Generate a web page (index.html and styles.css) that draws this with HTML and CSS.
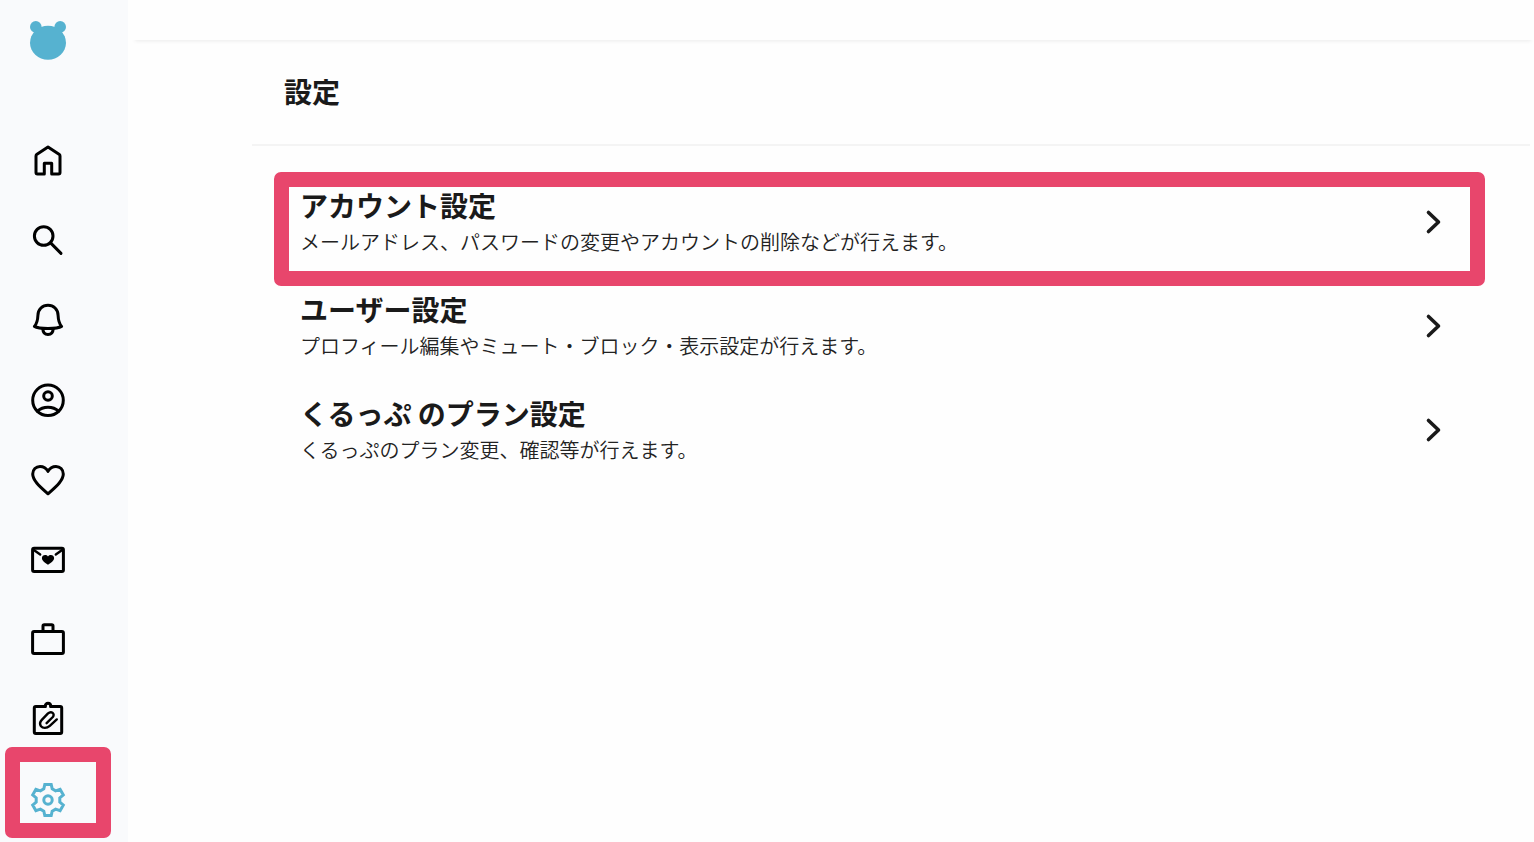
FILE: index.html
```
<!DOCTYPE html>
<html lang="ja">
  <head>
    <meta charset="UTF-8" />
    <meta name="viewport" content="width=device-width, initial-scale=1" />
    <title>設定</title>
    <link rel="stylesheet" href="styles.css">
  </head>
  <body>
    <div class="layout">
      <aside class="sidebar">
        <a class="logo" href="#" aria-label="くるっぷ">
          <svg viewBox="0 0 40 40">
            <circle cx="7.8" cy="6.9" r="5.8" />
            <circle cx="32.2" cy="6.9" r="5.8" />
            <ellipse cx="20" cy="22.7" rx="18" ry="17" />
          </svg>
        </a>
        <nav class="menu">
          <a class="menu-item" href="#" aria-label="ホーム">
            <svg viewBox="0 0 40 40">
              <path d="M20 7L31 14.2Q32 15 32 16V32.5Q32 34 30.5 34H23.7V23.2H16.3V34H9.5Q8 34 8 32.5V16Q8 15 9 14.2Z" />
            </svg>
          </a>
          <a class="menu-item" href="#" aria-label="検索">
            <svg viewBox="0 0 40 40">
              <circle cx="15.7" cy="16" r="9.3" />
              <path d="M22.6 22.9L33 33.4" />
            </svg>
          </a>
          <a class="menu-item" href="#" aria-label="通知">
            <svg viewBox="0 0 40 40">
              <path d="M6.4 26.4C9 23.5 9.7 20.5 9.9 15.5C10 9.3 14.5 5.2 20 5.2S30 9.3 30.1 15.5C30.3 20.5 31 23.5 33.6 26.4C29 29.2 11 29.2 6.4 26.4Z" />
              <path d="M14.8 28.8C15 32.4 17.2 34.4 20 34.4S25 32.4 25.2 28.8" />
            </svg>
          </a>
          <a class="menu-item" href="#" aria-label="プロフィール">
            <svg viewBox="0 0 40 40">
              <circle cx="20" cy="20.3" r="15.3" />
              <circle cx="20" cy="16" r="4.3" />
              <path d="M9.4 31.2C15 26 25 26 30.6 31.2" />
            </svg>
          </a>
          <a class="menu-item" href="#" aria-label="お気に入り">
            <svg viewBox="0 0 40 40">
              <path d="M20 33.8C13 27.5 4.7 20.8 4.7 14C4.7 9.5 8 6.4 12 6.4C15.8 6.4 18.3 8.2 20 11.4C21.7 8.2 24.2 6.4 28 6.4C32 6.4 35.3 9.5 35.3 14C35.3 20.8 27 27.5 20 33.8Z" />
            </svg>
          </a>
          <a class="menu-item" href="#" aria-label="レター">
            <svg viewBox="0 0 40 40">
              <rect x="4.6" y="8.2" width="30.8" height="23.4" rx="1.5" />
              <path d="M5.5 9.8L12.2 14.6M34.5 9.8L27.8 14.6" stroke-width="2.4" />
              <path class="solid" d="M20 24.8C17 23 13.9 20.6 13.9 18C13.9 14.8 18.2 14.2 20 16.4C21.8 14.2 26.1 14.8 26.1 18C26.1 20.6 23 23 20 24.8Z" />
            </svg>
          </a>
          <a class="menu-item" href="#" aria-label="ショップ">
            <svg viewBox="0 0 40 40">
              <rect x="4.6" y="11.4" width="30.8" height="22.2" rx="1.5" />
              <path d="M15 11V6Q15 4.7 16.3 4.7H23.7Q25 4.7 25 6V11" />
            </svg>
          </a>
          <a class="menu-item" href="#" aria-label="クリップ">
            <svg viewBox="0 0 40 40">
              <path d="M17.2 6.5H7.8Q6.3 6.5 6.3 8V32Q6.3 33.5 7.8 33.5H32.2Q33.7 33.5 33.7 32V8Q33.7 6.5 32.2 6.5H22.8" />
              <path d="M17.2 6.5C17.2 2.2 22.8 2.2 22.8 6.5" />
              <path d="M28.8 19.4L21.8 25.8C18.6 28.6 14.8 28.4 13 26.2C11.4 24 12 21.8 13.8 19.9L20 13.4C23.4 10.4 27.4 13.8 24.8 17L18.6 23.2" stroke-width="2.4" />
            </svg>
          </a>
          <a class="menu-item active marked" href="#" aria-label="設定" aria-current="page">
            <svg viewBox="0 0 40 40">
              <path d="M16.8 4.4L23.2 4.4L24.2 8.8L27.6 10.8L32.1 9.3L35.3 14.9L31.8 18L31.8 22L35.3 25.1L32.1 30.7L27.6 29.2L24.2 31.2L23.2 35.6L16.8 35.6L15.8 31.2L12.4 29.2L7.9 30.7L4.7 25.1L8.2 22L8.2 18L4.7 14.9L7.9 9.3L12.4 10.8L15.8 8.8Z" />
              <circle cx="20" cy="20" r="4.2" />
            </svg>
          </a>
        </nav>
      </aside>

      <div class="page">
        <header class="topbar"></header>
        <main class="content">
          <h1>設定</h1>
          <div class="list">
            <a class="item marked" href="#">
              <div class="item-text">
                <h2>アカウント設定</h2>
                <p>メールアドレス、パスワードの変更やアカウントの削除などが行えます。</p>
              </div>
              <svg class="arrow" viewBox="0 0 24 24"><path d="M6.5 2.5L16.5 12L6.5 21.5" /></svg>
            </a>
            <a class="item" href="#">
              <div class="item-text">
                <h2>ユーザー設定</h2>
                <p>プロフィール編集やミュート・ブロック・表示設定が行えます。</p>
              </div>
              <svg class="arrow" viewBox="0 0 24 24"><path d="M6.5 2.5L16.5 12L6.5 21.5" /></svg>
            </a>
            <a class="item" href="#">
              <div class="item-text">
                <h2>くるっぷ のプラン設定</h2>
                <p>くるっぷのプラン変更、確認等が行えます。</p>
              </div>
              <svg class="arrow" viewBox="0 0 24 24"><path d="M6.5 2.5L16.5 12L6.5 21.5" /></svg>
            </a>
          </div>
        </main>
      </div>
    </div>
  </body>
</html>
```
FILE: styles.css
```
* {
  box-sizing: border-box;
  margin: 0;
  padding: 0;
}

body {
  background-color: #fefefe;
  color: #1a1a1a;
  font-family: "Noto Sans CJK JP", sans-serif;
}

a {
  color: inherit;
  text-decoration: none;
}

.layout {
  display: flex;
  min-height: 100vh;
}

/* sidebar */
.sidebar {
  flex: none;
  width: 128px;
  background-color: #f9fafc;
}

.sidebar svg {
  display: block;
  width: 40px;
  height: 40px;
}

.logo {
  display: block;
  padding: 20px 28px;
  margin-bottom: 40px;
  fill: #56b2d0;
}

.menu {
  display: flex;
  flex-direction: column;
}

.menu-item {
  padding: 20px 28px;
  fill: none;
  stroke: #000;
  stroke-width: 3;
  stroke-linecap: round;
  stroke-linejoin: round;
}

.menu-item .solid {
  fill: #000;
  stroke: none;
}

.menu-item.active {
  stroke: #56b2d0;
  stroke-linejoin: miter;
}

/* pink frame drawn over the marked links */
.marked {
  position: relative;
}

.marked::after {
  content: "";
  position: absolute;
  border: 15px solid #e8466c;
  border-radius: 7px;
  pointer-events: none;
}

.menu-item.marked::after {
  inset: -13px 17px 2px 5px;
}

.item.marked::after {
  inset: 0 0 -10px 0;
}

/* main */
.page {
  flex: 1;
  min-width: 0;
}

.topbar {
  height: 40px;
  margin: 0 0 2px 4px;
  background-color: #fefefe;
  box-shadow: 0 4px 4px -3px rgba(0, 0, 0, 0.08);
}

.content {
  margin: 0 4px 0 124px;
}

h1 {
  padding: 28px 32px 32px;
  border-bottom: 2px solid #f4f4f4;
  font-size: 28px;
  font-weight: bold;
  line-height: 42px;
}

.list {
  padding: 26px 45px 0 22px;
}

.item {
  display: flex;
  justify-content: space-between;
  padding: 16px 39px 14px 26px;
}

.item h2 {
  font-size: 28px;
  font-weight: bold;
  line-height: 34px;
}

.item p {
  color: #222;
  font-size: 20px;
  font-weight: 350;
  line-height: 40px;
}

.arrow {
  flex: none;
  width: 24px;
  height: 68px;
  fill: none;
  stroke: #1a1a1a;
  stroke-width: 3.6;
  stroke-linecap: round;
  stroke-linejoin: round;
}
```
